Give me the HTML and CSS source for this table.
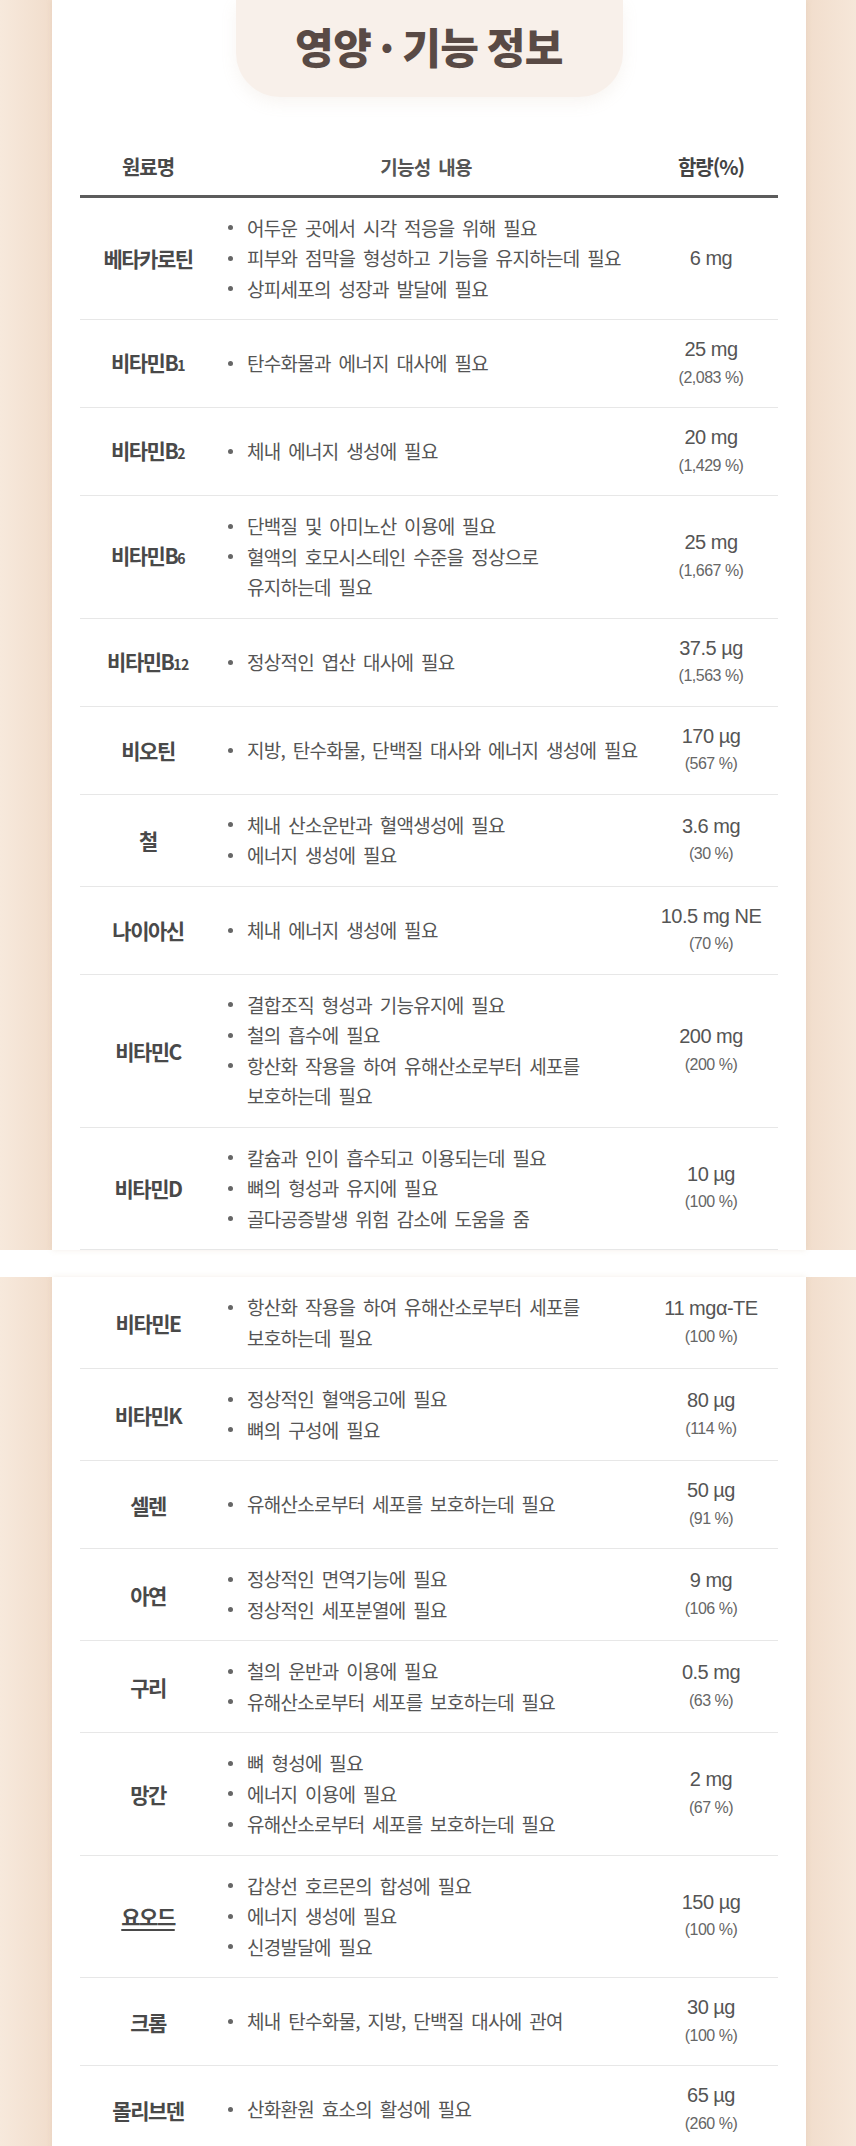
FILE: index.html
```html
<!DOCTYPE html>
<html lang="ko">
<head>
<meta charset="utf-8">
<title>영양 · 기능 정보</title>
<link rel="stylesheet" href="styles.css">
</head>
<body>
<div class="page">
  <section class="panel">
    <div class="card">
      <div class="title-pill"><h1 class="title">영양 · 기능 정보</h1></div>
      <div class="table">
        <div class="row head">
          <div class="name">원료명</div>
          <div class="desc head-desc">기능성 내용</div>
          <div class="amt head-amt">함량(%)</div>
        </div>

        <div class="row">
          <div class="name">베타카로틴</div>
          <div class="desc">
            <div class="item"><span class="dot"></span><span class="txt">어두운 곳에서 시각 적응을 위해 필요</span></div>
            <div class="item"><span class="dot"></span><span class="txt">피부와 점막을 형성하고 기능을 유지하는데 필요</span></div>
            <div class="item"><span class="dot"></span><span class="txt">상피세포의 성장과 발달에 필요</span></div>
          </div>
          <div class="amt"><div class="v">6 mg</div></div>
        </div>

        <div class="row">
          <div class="name">비타민B<span class="sub">1</span></div>
          <div class="desc">
            <div class="item"><span class="dot"></span><span class="txt">탄수화물과 에너지 대사에 필요</span></div>
          </div>
          <div class="amt"><div class="v">25 mg</div><div class="p">(2,083 %)</div></div>
        </div>

        <div class="row">
          <div class="name">비타민B<span class="sub">2</span></div>
          <div class="desc">
            <div class="item"><span class="dot"></span><span class="txt">체내 에너지 생성에 필요</span></div>
          </div>
          <div class="amt"><div class="v">20 mg</div><div class="p">(1,429 %)</div></div>
        </div>

        <div class="row">
          <div class="name">비타민B<span class="sub">6</span></div>
          <div class="desc">
            <div class="item"><span class="dot"></span><span class="txt">단백질 및 아미노산 이용에 필요</span></div>
            <div class="item"><span class="dot"></span><span class="txt">혈액의 호모시스테인 수준을 정상으로<br>유지하는데 필요</span></div>
          </div>
          <div class="amt"><div class="v">25 mg</div><div class="p">(1,667 %)</div></div>
        </div>

        <div class="row">
          <div class="name">비타민B<span class="sub">12</span></div>
          <div class="desc">
            <div class="item"><span class="dot"></span><span class="txt">정상적인 엽산 대사에 필요</span></div>
          </div>
          <div class="amt"><div class="v">37.5 µg</div><div class="p">(1,563 %)</div></div>
        </div>

        <div class="row">
          <div class="name">비오틴</div>
          <div class="desc">
            <div class="item"><span class="dot"></span><span class="txt">지방, 탄수화물, 단백질 대사와 에너지 생성에 필요</span></div>
          </div>
          <div class="amt"><div class="v">170 µg</div><div class="p">(567 %)</div></div>
        </div>

        <div class="row">
          <div class="name">철</div>
          <div class="desc">
            <div class="item"><span class="dot"></span><span class="txt">체내 산소운반과 혈액생성에 필요</span></div>
            <div class="item"><span class="dot"></span><span class="txt">에너지 생성에 필요</span></div>
          </div>
          <div class="amt"><div class="v">3.6 mg</div><div class="p">(30 %)</div></div>
        </div>

        <div class="row">
          <div class="name">나이아신</div>
          <div class="desc">
            <div class="item"><span class="dot"></span><span class="txt">체내 에너지 생성에 필요</span></div>
          </div>
          <div class="amt"><div class="v">10.5 mg NE</div><div class="p">(70 %)</div></div>
        </div>

        <div class="row">
          <div class="name">비타민C</div>
          <div class="desc">
            <div class="item"><span class="dot"></span><span class="txt">결합조직 형성과 기능유지에 필요</span></div>
            <div class="item"><span class="dot"></span><span class="txt">철의 흡수에 필요</span></div>
            <div class="item"><span class="dot"></span><span class="txt">항산화 작용을 하여 유해산소로부터 세포를<br>보호하는데 필요</span></div>
          </div>
          <div class="amt"><div class="v">200 mg</div><div class="p">(200 %)</div></div>
        </div>

        <div class="row">
          <div class="name">비타민D</div>
          <div class="desc">
            <div class="item"><span class="dot"></span><span class="txt">칼슘과 인이 흡수되고 이용되는데 필요</span></div>
            <div class="item"><span class="dot"></span><span class="txt">뼈의 형성과 유지에 필요</span></div>
            <div class="item"><span class="dot"></span><span class="txt">골다공증발생 위험 감소에 도움을 줌</span></div>
          </div>
          <div class="amt"><div class="v">10 µg</div><div class="p">(100 %)</div></div>
        </div>
      </div>
    </div>
  </section>

  <section class="panel panel-second">
    <div class="card">
      <div class="table">
        <div class="row">
          <div class="name">비타민E</div>
          <div class="desc">
            <div class="item"><span class="dot"></span><span class="txt">항산화 작용을 하여 유해산소로부터 세포를<br>보호하는데 필요</span></div>
          </div>
          <div class="amt"><div class="v">11 mgα-TE</div><div class="p">(100 %)</div></div>
        </div>

        <div class="row">
          <div class="name">비타민K</div>
          <div class="desc">
            <div class="item"><span class="dot"></span><span class="txt">정상적인 혈액응고에 필요</span></div>
            <div class="item"><span class="dot"></span><span class="txt">뼈의 구성에 필요</span></div>
          </div>
          <div class="amt"><div class="v">80 µg</div><div class="p">(114 %)</div></div>
        </div>

        <div class="row">
          <div class="name">셀렌</div>
          <div class="desc">
            <div class="item"><span class="dot"></span><span class="txt">유해산소로부터 세포를 보호하는데 필요</span></div>
          </div>
          <div class="amt"><div class="v">50 µg</div><div class="p">(91 %)</div></div>
        </div>

        <div class="row">
          <div class="name">아연</div>
          <div class="desc">
            <div class="item"><span class="dot"></span><span class="txt">정상적인 면역기능에 필요</span></div>
            <div class="item"><span class="dot"></span><span class="txt">정상적인 세포분열에 필요</span></div>
          </div>
          <div class="amt"><div class="v">9 mg</div><div class="p">(106 %)</div></div>
        </div>

        <div class="row">
          <div class="name">구리</div>
          <div class="desc">
            <div class="item"><span class="dot"></span><span class="txt">철의 운반과 이용에 필요</span></div>
            <div class="item"><span class="dot"></span><span class="txt">유해산소로부터 세포를 보호하는데 필요</span></div>
          </div>
          <div class="amt"><div class="v">0.5 mg</div><div class="p">(63 %)</div></div>
        </div>

        <div class="row">
          <div class="name">망간</div>
          <div class="desc">
            <div class="item"><span class="dot"></span><span class="txt">뼈 형성에 필요</span></div>
            <div class="item"><span class="dot"></span><span class="txt">에너지 이용에 필요</span></div>
            <div class="item"><span class="dot"></span><span class="txt">유해산소로부터 세포를 보호하는데 필요</span></div>
          </div>
          <div class="amt"><div class="v">2 mg</div><div class="p">(67 %)</div></div>
        </div>

        <div class="row">
          <div class="name"><span class="ul">요오드</span></div>
          <div class="desc">
            <div class="item"><span class="dot"></span><span class="txt">갑상선 호르몬의 합성에 필요</span></div>
            <div class="item"><span class="dot"></span><span class="txt">에너지 생성에 필요</span></div>
            <div class="item"><span class="dot"></span><span class="txt">신경발달에 필요</span></div>
          </div>
          <div class="amt"><div class="v">150 µg</div><div class="p">(100 %)</div></div>
        </div>

        <div class="row">
          <div class="name">크롬</div>
          <div class="desc">
            <div class="item"><span class="dot"></span><span class="txt">체내 탄수화물, 지방, 단백질 대사에 관여</span></div>
          </div>
          <div class="amt"><div class="v">30 µg</div><div class="p">(100 %)</div></div>
        </div>

        <div class="row">
          <div class="name">몰리브덴</div>
          <div class="desc">
            <div class="item"><span class="dot"></span><span class="txt">산화환원 효소의 활성에 필요</span></div>
          </div>
          <div class="amt"><div class="v">65 µg</div><div class="p">(260 %)</div></div>
        </div>
      </div>
    </div>
  </section>
</div>
</body>
</html>
```

FILE: styles.css
```css
html, body {
  margin: 0;
  padding: 0;
  background: #ffffff;
}

.page {
  height: 2146px;
  overflow: hidden;
  font-family: "Noto Sans CJK KR", "Noto Sans", sans-serif;
  color: #555555;
}

.panel {
  background: linear-gradient(90deg, #f7e9dc 0px, #f1ddcc 52px, #f1ddcc 806px, #f6e7d9 856px);
}

.panel-second {
  margin-top: 27px;
}

.card {
  margin: 0 50px 0 52px;
  background: #ffffff;
  padding: 0 28px;
  box-shadow: 0 0 6px rgba(190, 160, 130, 0.18);
}

.title-pill {
  width: 387px;
  height: 97px;
  margin: 0 auto;
  box-sizing: border-box;
  padding-top: 21px;
  background: #f8f0ea;
  border-radius: 0 0 44px 44px;
  box-shadow: 0 6px 16px rgba(200, 170, 150, 0.12);
  text-align: center;
}

.title {
  margin: 0;
  font-size: 42px;
  line-height: 50px;
  font-weight: 900;
  color: #594a45;
  word-spacing: -3px;
  letter-spacing: -0.5px;
}

.row {
  display: grid;
  grid-template-columns: 136px 1fr 134px;
  align-items: center;
  padding: 15px 0;
  border-bottom: 1px solid #e7e7e7;
}

.row.head {
  margin-top: 43px;
  padding: 12px 0;
  border-bottom: 3px solid #5c5c5c;
  font-size: 20px;
  line-height: 30px;
  font-weight: 700;
  color: #444444;
  letter-spacing: -1px;
}

.row.head .name {
  font-size: 20px;
  letter-spacing: -1px;
}

.head-desc {
  text-align: center;
  padding-right: 20px;
}

.name {
  text-align: center;
  font-size: 21px;
  line-height: 30px;
  font-weight: 700;
  color: #494949;
  letter-spacing: -1.5px;
}

.sub {
  font-size: 14px;
  letter-spacing: -0.5px;
}

.ul {
  text-decoration: underline;
  text-underline-offset: 4px;
  text-decoration-thickness: 1.5px;
}

.desc {
  padding-left: 12px;
  font-size: 19px;
  line-height: 30.5px;
  letter-spacing: -0.7px;
  word-spacing: 3px;
  white-space: nowrap;
  color: #555555;
}

.item {
  display: flex;
}

.dot {
  flex: none;
  width: 19px;
  height: 30.5px;
  display: flex;
  align-items: center;
}

.dot::before {
  content: "";
  width: 5px;
  height: 5px;
  border-radius: 50%;
  background: #666666;
}

.amt {
  text-align: center;
  font-family: "Liberation Sans", Arial, sans-serif;
  white-space: nowrap;
}

.head-amt {
  font-family: "Noto Sans CJK KR", sans-serif;
}

.v {
  font-size: 20px;
  line-height: 28.5px;
  letter-spacing: -0.5px;
  color: #555555;
}

.p {
  font-size: 16px;
  line-height: 28.5px;
  letter-spacing: -0.5px;
  color: #666666;
}
```
